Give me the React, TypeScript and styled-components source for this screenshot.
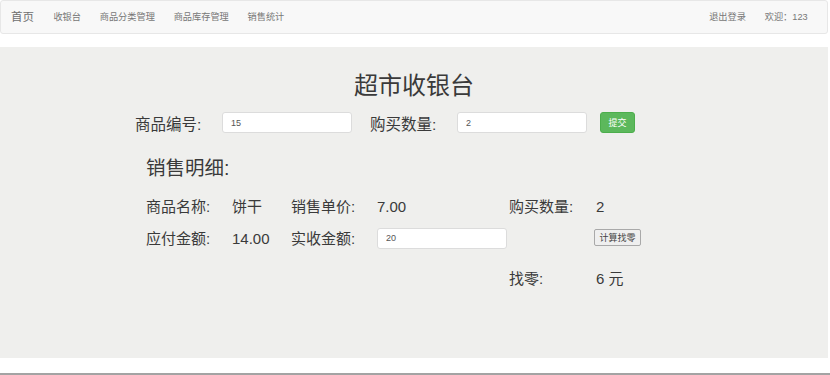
import React from "react";
import styled, { createGlobalStyle } from "styled-components";

const Global = createGlobalStyle`
  html, body { margin: 0; padding: 0; background: #ffffff; }
  body {
    font-family: "Liberation Sans", "Noto Sans CJK SC", sans-serif;
    color: #333333;
  }
  * { box-sizing: border-box; }
`;

const Page = styled.div`
  width: 830px;
  padding-right: 2px;
`;

const Navbar = styled.nav`
  height: 34px;
  background: #f8f8f8;
  border: 1px solid #e7e7e7;
  border-radius: 3px;
  display: flex;
  align-items: center;
  justify-content: space-between;
`;

const NavGroup = styled.div<{ $right?: boolean }>`
  display: flex;
  align-items: center;
  margin-right: ${(p) => (p.$right ? "10px" : "0")};
`;

const Brand = styled.a`
  font-size: 11.5px;
  color: #6f6f6f;
  padding: 0 10px;
  line-height: 14px;
`;

const NavLink = styled.a`
  font-size: 9.2px;
  color: #777777;
  padding: 0 9.4px;
  line-height: 12px;
`;

const Jumbotron = styled.section`
  margin-top: 13px;
  height: 311px;
  background: #efefed;
  padding-top: 26px;
`;

const Title = styled.h1`
  margin: 0;
  text-align: center;
  font-size: 24px;
  line-height: 26px;
  font-weight: normal;
  color: #3a3a3a;
`;

const QueryRow = styled.div`
  margin-top: 13px;
  padding-left: 135px;
  display: grid;
  grid-template-columns: 87px 148px 87px 143px auto;
  align-items: start;
`;

const FieldLabel = styled.label`
  font-size: 15.5px;
  line-height: 16px;
  margin-top: 5px;
  color: #3a3a3a;
  white-space: nowrap;
`;

const TextInput = styled.input`
  width: 130px;
  height: 21px;
  background: #ffffff;
  border: 1px solid #dcdcdc;
  border-radius: 3px;
  padding: 0 0 0 8px;
  font-family: "Liberation Sans", sans-serif;
  font-size: 9px;
  color: #555555;
  outline: none;
`;

const SubmitButton = styled.button`
  width: 35px;
  height: 21px;
  background: #5cb85c;
  border: 1px solid #4cae4c;
  border-radius: 3px;
  color: #ffffff;
  font-family: "Liberation Sans", "Noto Sans CJK SC", sans-serif;
  font-size: 9px;
  padding: 0;
`;

const SectionTitle = styled.h2`
  margin: 24px 0 0 146px;
  font-size: 19.5px;
  line-height: 22px;
  font-weight: normal;
  color: #3a3a3a;
`;

const DetailRow = styled.div<{ $gap: number; $height: number }>`
  margin-top: ${(p) => p.$gap}px;
  height: ${(p) => p.$height}px;
  padding-left: 146px;
  display: grid;
  grid-template-columns: 86px 59px 86px 132px 87px auto;
  align-items: start;
`;

const Cell = styled.span<{ $col: number; $offset?: number }>`
  grid-column: ${(p) => p.$col};
  grid-row: 1;
  font-size: 15px;
  line-height: 18px;
  margin-top: ${(p) => p.$offset ?? 0}px;
  color: #3a3a3a;
  white-space: nowrap;
`;

const InputCell = styled.div<{ $col: number }>`
  grid-column: ${(p) => p.$col};
  grid-row: 1;
`;

const CalcButton = styled.button`
  grid-column: 6;
  grid-row: 1;
  justify-self: start;
  margin: 2px 0 0 -2px;
  width: 47px;
  height: 17px;
  padding: 0;
  background: #efefef;
  border: 1px solid #a9a9a9;
  border-radius: 2px;
  font-family: "Liberation Sans", "Noto Sans CJK SC", sans-serif;
  font-size: 9px;
  color: #444444;
`;

const Footer = styled.div`
  margin-top: 15px;
  height: 2px;
  width: 830px;
  background: #a3a3a3;
`;

export default function App() {
  return (
    <>
      <Global />
      <Page>
        <Navbar>
          <NavGroup>
            <Brand>首页</Brand>
            <NavLink>收银台</NavLink>
            <NavLink>商品分类管理</NavLink>
            <NavLink>商品库存管理</NavLink>
            <NavLink>销售统计</NavLink>
          </NavGroup>
          <NavGroup $right>
            <NavLink>退出登录</NavLink>
            <NavLink>欢迎：123</NavLink>
          </NavGroup>
        </Navbar>
        <Jumbotron>
          <Title>超市收银台</Title>
          <QueryRow>
            <FieldLabel>商品编号:</FieldLabel>
            <TextInput defaultValue="15" />
            <FieldLabel>购买数量:</FieldLabel>
            <TextInput defaultValue="2" />
            <SubmitButton>提交</SubmitButton>
          </QueryRow>
          <SectionTitle>销售明细:</SectionTitle>
          <DetailRow $gap={19} $height={18}>
            <Cell $col={1}>商品名称:</Cell>
            <Cell $col={2}>饼干</Cell>
            <Cell $col={3}>销售单价:</Cell>
            <Cell $col={4}>7.00</Cell>
            <Cell $col={5}>购买数量:</Cell>
            <Cell $col={6}>2</Cell>
          </DetailRow>
          <DetailRow $gap={11} $height={21}>
            <Cell $col={1} $offset={3}>应付金额:</Cell>
            <Cell $col={2} $offset={3}>14.00</Cell>
            <Cell $col={3} $offset={3}>实收金额:</Cell>
            <InputCell $col={4}>
              <TextInput defaultValue="20" />
            </InputCell>
            <CalcButton>计算找零</CalcButton>
          </DetailRow>
          <DetailRow $gap={22} $height={18}>
            <Cell $col={5}>找零:</Cell>
            <Cell $col={6}>6 元</Cell>
          </DetailRow>
        </Jumbotron>
        <Footer />
      </Page>
    </>
  );
}
